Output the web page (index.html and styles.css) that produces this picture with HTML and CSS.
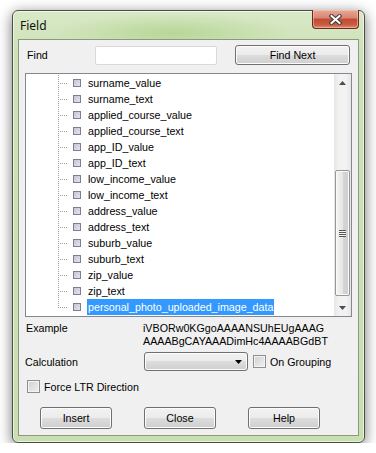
FILE: index.html
```html
<!DOCTYPE html>
<html lang="en">
<head>
    <meta charset="UTF-8">
    <title>Field</title>
    <link rel="stylesheet" href="styles.css">
</head>
<body>

    <div class="window">
        <!-- Title bar -->
        <div class="titlebar">
            <span class="title">Field</span>
            <button class="close-btn" title="Close">
                <svg width="13" height="11" viewBox="0 0 13 11">
                    <path d="M2.5 2 L10.5 9 M10.5 2 L2.5 9" stroke="#3c3c3c" stroke-width="4" stroke-linecap="square" fill="none"/>
                    <path d="M2.5 2 L10.5 9 M10.5 2 L2.5 9" stroke="#ffffff" stroke-width="2" stroke-linecap="square" fill="none"/>
                </svg>
            </button>
        </div>

        <div class="client">
            <!-- Find row -->
            <div class="find-row">
                <label class="find-label">Find</label>
                <input type="text" class="find-input">
                <button class="btn find-btn">Find Next</button>
            </div>

            <!-- Field tree -->
            <div class="tree">
                <ul class="tree-list">
                    <li class="node"><span class="twig"></span><span class="leaf"></span><span class="name">surname_value</span></li>
                    <li class="node"><span class="twig"></span><span class="leaf"></span><span class="name">surname_text</span></li>
                    <li class="node"><span class="twig"></span><span class="leaf"></span><span class="name">applied_course_value</span></li>
                    <li class="node"><span class="twig"></span><span class="leaf"></span><span class="name">applied_course_text</span></li>
                    <li class="node"><span class="twig"></span><span class="leaf"></span><span class="name">app_ID_value</span></li>
                    <li class="node"><span class="twig"></span><span class="leaf"></span><span class="name">app_ID_text</span></li>
                    <li class="node"><span class="twig"></span><span class="leaf"></span><span class="name">low_income_value</span></li>
                    <li class="node"><span class="twig"></span><span class="leaf"></span><span class="name">low_income_text</span></li>
                    <li class="node"><span class="twig"></span><span class="leaf"></span><span class="name">address_value</span></li>
                    <li class="node"><span class="twig"></span><span class="leaf"></span><span class="name">address_text</span></li>
                    <li class="node"><span class="twig"></span><span class="leaf"></span><span class="name">suburb_value</span></li>
                    <li class="node"><span class="twig"></span><span class="leaf"></span><span class="name">suburb_text</span></li>
                    <li class="node"><span class="twig"></span><span class="leaf"></span><span class="name">zip_value</span></li>
                    <li class="node"><span class="twig"></span><span class="leaf"></span><span class="name">zip_text</span></li>
                    <li class="node last"><span class="twig"></span><span class="leaf"></span><span class="name selected">personal_photo_uploaded_image_data</span></li>
                </ul>

                <!-- Scrollbar -->
                <div class="scrollbar">
                    <div class="arrow">
                        <svg width="7" height="4" viewBox="0 0 7 4"><path d="M3.5 0 L7 4 L0 4 Z" fill="#4d4d4d"/></svg>
                    </div>
                    <div class="track">
                        <div class="thumb">
                            <span class="grip"></span>
                        </div>
                    </div>
                    <div class="arrow">
                        <svg width="7" height="4" viewBox="0 0 7 4"><path d="M0 0 L7 0 L3.5 4 Z" fill="#4d4d4d"/></svg>
                    </div>
                </div>
            </div>

            <!-- Example -->
            <div class="example-row">
                <span class="example-label">Example</span>
                <span class="example-value">iVBORw0KGgoAAAANSUhEUgAAAG<br>AAAABgCAYAAADimHc4AAAABGdBT</span>
            </div>

            <!-- Calculation -->
            <div class="calc-row">
                <span class="calc-label">Calculation</span>
                <div class="combo">
                    <svg width="7" height="4" viewBox="0 0 7 4"><path d="M0 0 L7 0 L3.5 4 Z" fill="#000"/></svg>
                </div>
                <span class="check"></span>
                <span class="check-label">On Grouping</span>
            </div>

            <div class="force-row">
                <span class="check"></span>
                <span class="check-label">Force LTR Direction</span>
            </div>

            <!-- Dialog buttons -->
            <div class="button-row">
                <button class="btn">Insert</button>
                <button class="btn">Close</button>
                <button class="btn">Help</button>
            </div>
        </div>
    </div>

</body>
</html>
```

FILE: styles.css
```css
body {
    margin: 0;
    background-color: #ffffff;
    font-family: 'Liberation Sans', Arial, sans-serif;
    font-size: 10.7px;
    color: #000000;
}

.window {
    box-sizing: border-box;
    width: 353px;
    height: 433px;
    margin: 10px 0 0 12px;
    padding: 0 5px 6px 5px;
    border: 1px solid #4a4f45;
    border-radius: 6px;
    display: flex;
    flex-direction: column;
    background:
        radial-gradient(ellipse 120px 20px at 160px 22px, rgba(180, 212, 145, 0.85), transparent),
        linear-gradient(#d9e9c8, #cde2b6 40px, #c9dfb0);
    box-shadow: 0 3px 14px rgba(0, 0, 0, 0.55), inset 0 0 0 1px rgba(255, 255, 255, 0.6);
}

.titlebar {
    height: 28px;
    display: flex;
    justify-content: space-between;
    align-items: center;
    padding-left: 2px;
}

.title {
    font-family: 'Noto Sans', 'Open Sans', sans-serif;
    font-size: 12px;
    color: #111111;
}

.close-btn {
    align-self: flex-start;
    margin-top: -1px;
    width: 47px;
    height: 19px;
    padding: 0;
    border: 1px solid #6b2a1f;
    border-top: none;
    border-radius: 0 0 4px 4px;
    background: linear-gradient(#e8a897 0%, #d98471 45%, #c24a33 50%, #c85a40 80%, #e08a6c 100%);
    box-shadow: inset 0 0 0 1px rgba(255, 210, 200, 0.5);
    display: flex;
    align-items: center;
    justify-content: center;
}

.client {
    flex: 1;
    background-color: #f0f0f0;
    border: 1px solid #8b9883;
    padding: 5px 6px 0 6px;
}

.find-row {
    display: flex;
    align-items: center;
    height: 20px;
}

.find-label {
    width: 68px;
    padding-left: 2px;
}

.find-input {
    box-sizing: border-box;
    width: 122px;
    height: 19px;
    margin: 0;
    border: 1px solid #d9d9d9;
    border-radius: 2px;
    background-color: #ffffff;
}

.btn {
    box-sizing: border-box;
    width: 72px;
    height: 22px;
    padding: 0;
    font-family: 'Liberation Sans', Arial, sans-serif;
    font-size: 10.7px;
    color: #000000;
    border: 1px solid #707070;
    border-radius: 3px;
    background: linear-gradient(#f2f2f2 0%, #ebebeb 50%, #dddddd 50%, #cfcfcf 100%);
    box-shadow: inset 0 0 0 1px #fcfcfc;
}

.find-btn {
    width: 115px;
    height: 20px;
    margin-left: 18px;
}

.tree {
    margin-top: 8px;
    height: 244px;
    box-sizing: border-box;
    border: 1px solid #828790;
    background-color: #ffffff;
    display: flex;
    overflow: hidden;
}

.tree-list {
    flex: 1;
    list-style: none;
    margin: 0;
    padding: 1px 0 0 0;
}

.node {
    height: 16px;
    display: flex;
    align-items: center;
    white-space: nowrap;
}

.twig {
    width: 10px;
    height: 16px;
    margin-left: 32px;
    background:
        repeating-linear-gradient(to bottom, #a0a0a0 0 1px, transparent 1px 2px) left top / 1px 100% no-repeat,
        repeating-linear-gradient(to right, #a0a0a0 0 1px, transparent 1px 2px) left 8px / 10px 1px no-repeat;
}

.last .twig {
    background:
        repeating-linear-gradient(to bottom, #a0a0a0 0 1px, transparent 1px 2px) left top / 1px 9px no-repeat,
        repeating-linear-gradient(to right, #a0a0a0 0 1px, transparent 1px 2px) left 8px / 10px 1px no-repeat;
}

.leaf {
    box-sizing: border-box;
    width: 8px;
    height: 8px;
    margin-left: 5px;
    border: 1px solid #80808c;
    background: linear-gradient(135deg, #c4c4d8, #e4e4f0);
}

.name {
    margin-left: 6px;
    padding: 0 1px;
    line-height: 16px;
}

.selected {
    background-color: #3399ff;
    color: #ffffff;
}

.scrollbar {
    width: 17px;
    display: flex;
    flex-direction: column;
    background: linear-gradient(to right, #e6e6e6, #f2f2f2 30%, #f2f2f2 70%, #e6e6e6);
}

.arrow {
    height: 17px;
    display: flex;
    align-items: center;
    justify-content: center;
}

.track {
    flex: 1;
}

.thumb {
    box-sizing: border-box;
    width: 15px;
    height: 126px;
    margin: 79px 0 0 1px;
    border: 1px solid #979797;
    border-radius: 2px;
    background: linear-gradient(to right, #f4f4f4, #e6e6e6 50%, #d6d6d6 50%, #cfcfcf);
    box-shadow: inset 0 0 0 1px #fafafa;
    display: flex;
    align-items: center;
    justify-content: center;
}

.grip {
    width: 7px;
    height: 7px;
    background: repeating-linear-gradient(to bottom, #555555 0 1px, #f4f4f4 1px 2px);
}

.example-row {
    display: flex;
    margin-top: 5px;
    line-height: 13px;
}

.example-label {
    width: 117px;
    padding-left: 1px;
}

.calc-row {
    display: flex;
    align-items: center;
    margin-top: 4px;
    height: 19px;
}

.calc-label {
    width: 119px;
}

.combo {
    box-sizing: border-box;
    width: 104px;
    height: 19px;
    border: 1px solid #707070;
    border-radius: 3px;
    background: linear-gradient(#f2f2f2 0%, #ebebeb 50%, #dddddd 50%, #cfcfcf 100%);
    box-shadow: inset 0 0 0 1px #fcfcfc;
    display: flex;
    align-items: center;
    justify-content: flex-end;
    padding-right: 5px;
}

.check {
    box-sizing: border-box;
    width: 13px;
    height: 13px;
    margin-left: 5px;
    border: 1px solid #8e8f8f;
    background: linear-gradient(135deg, #cfcfcf, #f2f2f2);
    box-shadow: inset 0 0 0 1px #f4f4f4;
}

.check-label {
    margin-left: 4px;
}

.force-row {
    display: flex;
    align-items: center;
    height: 13px;
    margin-top: 9px;
}

.force-row .check {
    margin-left: 2px;
}

.button-row {
    display: flex;
    gap: 32px;
    margin-top: 14px;
    padding-left: 15px;
}
```
